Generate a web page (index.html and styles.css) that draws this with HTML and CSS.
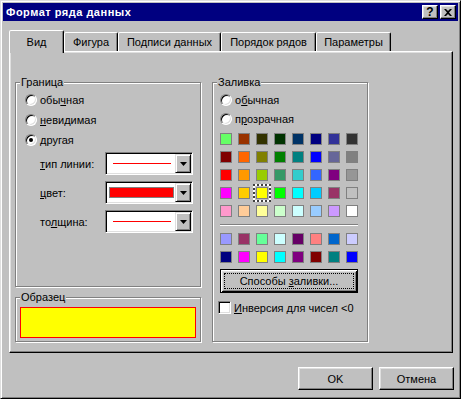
FILE: index.html
```html
<!DOCTYPE html>
<html lang="ru">
<head>
    <meta charset="UTF-8">
    <title>Формат ряда данных</title>
    <link rel="stylesheet" href="styles.css">
</head>
<body>

    <div class="window">
        <!-- Title bar -->
        <div class="titlebar">
            <span class="title">Формат ряда данных</span>
            <div class="title-buttons">
                <div class="tbtn help">?</div>
                <div class="tbtn">
                    <svg width="8" height="7" viewBox="0 0 8 7"><path d="M0 0h2l2 2 2-2h2L5 3.5 8 7H6L4 5 2 7H0l3-3.5z" fill="#000"/></svg>
                </div>
            </div>
        </div>

        <!-- Tabs -->
        <div class="tabs">
            <div class="tab active" style="width:55px">Вид</div>
            <div class="tab" style="width:54px">Фигура</div>
            <div class="tab" style="width:103px">Подписи данных</div>
            <div class="tab" style="width:95px">Порядок рядов</div>
            <div class="tab" style="width:75px">Параметры</div>
        </div>

        <!-- Tab page -->
        <div class="panel">
            <div class="col-left">
                <div class="group border-group">
                    <div class="group-title">Граница</div>
                    <div class="radio-row"><span class="rb"></span><span>обы<u>ч</u>ная</span></div>
                    <div class="radio-row"><span class="rb"></span><span><u>н</u>евидимая</span></div>
                    <div class="radio-row"><span class="rb checked"></span><span>другая</span></div>

                    <div class="combo-grid">
                        <span class="combo-label"><u>т</u>ип линии:</span>
                        <div class="combo">
                            <div class="combo-val"><span class="red-line"></span></div>
                            <div class="combo-btn"><svg width="7" height="4" viewBox="0 0 7 4"><path d="M0 0h7L3.5 4z" fill="#000"/></svg></div>
                        </div>

                        <span class="combo-label"><u>ц</u>вет:</span>
                        <div class="combo">
                            <div class="combo-val"><span class="red-box"></span></div>
                            <div class="combo-btn"><svg width="7" height="4" viewBox="0 0 7 4"><path d="M0 0h7L3.5 4z" fill="#000"/></svg></div>
                        </div>

                        <span class="combo-label">то<u>л</u>щина:</span>
                        <div class="combo">
                            <div class="combo-val"><span class="red-line"></span></div>
                            <div class="combo-btn"><svg width="7" height="4" viewBox="0 0 7 4"><path d="M0 0h7L3.5 4z" fill="#000"/></svg></div>
                        </div>
                    </div>
                </div>

                <div class="group sample-group">
                    <div class="group-title">Образец</div>
                    <div class="sample"></div>
                </div>
            </div>

            <div class="group fill-group">
                <div class="group-title">Заливка</div>
                <div class="radio-row short"><span class="rb"></span><span>о<u>б</u>ычная</span></div>
                <div class="radio-row short"><span class="rb"></span><span>п<u>р</u>озрачная</span></div>

                <div class="palette first">
                    <span class="cell" style="background:#66ff66"></span>
                    <span class="cell" style="background:#993300"></span>
                    <span class="cell" style="background:#333300"></span>
                    <span class="cell" style="background:#003300"></span>
                    <span class="cell" style="background:#003366"></span>
                    <span class="cell" style="background:#000080"></span>
                    <span class="cell" style="background:#333399"></span>
                    <span class="cell" style="background:#333333"></span>

                    <span class="cell" style="background:#800000"></span>
                    <span class="cell" style="background:#ff6600"></span>
                    <span class="cell" style="background:#808000"></span>
                    <span class="cell" style="background:#008000"></span>
                    <span class="cell" style="background:#008080"></span>
                    <span class="cell" style="background:#0000ff"></span>
                    <span class="cell" style="background:#666699"></span>
                    <span class="cell" style="background:#808080"></span>

                    <span class="cell" style="background:#ff0000"></span>
                    <span class="cell" style="background:#ff9900"></span>
                    <span class="cell" style="background:#99cc00"></span>
                    <span class="cell" style="background:#339966"></span>
                    <span class="cell" style="background:#33cccc"></span>
                    <span class="cell" style="background:#3366ff"></span>
                    <span class="cell" style="background:#800080"></span>
                    <span class="cell" style="background:#969696"></span>

                    <span class="cell" style="background:#ff00ff"></span>
                    <span class="cell" style="background:#ffcc00"></span>
                    <span class="cell selected" style="background:#ffff00"></span>
                    <span class="cell" style="background:#00ff00"></span>
                    <span class="cell" style="background:#00ffff"></span>
                    <span class="cell" style="background:#00ccff"></span>
                    <span class="cell" style="background:#993366"></span>
                    <span class="cell" style="background:#c0c0c0"></span>

                    <span class="cell" style="background:#ff99cc"></span>
                    <span class="cell" style="background:#ffcc99"></span>
                    <span class="cell" style="background:#ffff99"></span>
                    <span class="cell" style="background:#ccffcc"></span>
                    <span class="cell" style="background:#ccffff"></span>
                    <span class="cell" style="background:#99ccff"></span>
                    <span class="cell" style="background:#cc99ff"></span>
                    <span class="cell" style="background:#ffffff"></span>
                </div>

                <div class="separator"></div>

                <div class="palette">
                    <span class="cell" style="background:#9999ff"></span>
                    <span class="cell" style="background:#993366"></span>
                    <span class="cell" style="background:#66ff99"></span>
                    <span class="cell" style="background:#ccffff"></span>
                    <span class="cell" style="background:#660066"></span>
                    <span class="cell" style="background:#ff8080"></span>
                    <span class="cell" style="background:#0066cc"></span>
                    <span class="cell" style="background:#ccccff"></span>

                    <span class="cell" style="background:#000080"></span>
                    <span class="cell" style="background:#ff00ff"></span>
                    <span class="cell" style="background:#ffff00"></span>
                    <span class="cell" style="background:#00ffff"></span>
                    <span class="cell" style="background:#800080"></span>
                    <span class="cell" style="background:#800000"></span>
                    <span class="cell" style="background:#008080"></span>
                    <span class="cell" style="background:#0000ff"></span>
                </div>

                <div class="btn default fill-btn"><span class="focus"><span>Способы <u>з</u>аливки...</span></span></div>

                <div class="check-row"><span class="cb"></span><span><u>И</u>нверсия для чисел &lt;0</span></div>
            </div>
        </div>

        <!-- Dialog buttons -->
        <div class="footer">
            <div class="btn">OK</div>
            <div class="btn">Отмена</div>
        </div>
    </div>

</body>
</html>
```

FILE: styles.css
```css
/* Classic grey dialog palette */
:root {
    --face: #c0c0c0;
    --light: #dfdfdf;
    --hilite: #ffffff;
    --shadow: #808080;
    --dark: #000000;
    --title: #000080;
}

* {
    margin: 0;
    padding: 0;
    box-sizing: border-box;
}

body {
    background: var(--face);
    font-family: "Liberation Sans", Arial, sans-serif;
    font-size: 11px;
    color: #000;
}

u {
    text-decoration-thickness: 1px;
    text-underline-offset: 1px;
}

/* Window frame */
.window {
    width: 461px;
    height: 399px;
    border: 1px solid;
    border-color: var(--light) var(--dark) var(--dark) var(--light);
    box-shadow: inset 1px 1px var(--hilite), inset -1px -1px var(--shadow);
    padding: 2px;
}

/* Title bar */
.titlebar {
    height: 18px;
    background: var(--title);
    display: flex;
    align-items: center;
    justify-content: space-between;
    padding: 0 2px 0 3px;
}

.title {
    color: #fff;
    font-weight: bold;
    font-size: 11px;
    letter-spacing: 0.5px;
}

.title-buttons {
    display: flex;
    gap: 2px;
}

.tbtn {
    width: 16px;
    height: 14px;
    background: var(--face);
    border: 1px solid;
    border-color: var(--hilite) var(--dark) var(--dark) var(--hilite);
    box-shadow: inset -1px -1px var(--shadow), inset 1px 1px var(--light);
    display: flex;
    align-items: center;
    justify-content: center;
}

.tbtn.help {
    font-weight: bold;
    font-size: 12px;
    line-height: 12px;
}

/* Tabs */
.tabs {
    display: flex;
    align-items: flex-end;
    height: 21px;
    margin: 9px 0 0 6px;
}

.tab {
    height: 19px;
    border: 1px solid;
    border-bottom: none;
    border-color: var(--hilite) var(--dark) transparent var(--hilite);
    border-radius: 2px 2px 0 0;
    box-shadow: inset -1px 0 var(--shadow);
    text-align: center;
    padding-top: 3px;
    background: var(--face);
}

.tab.active {
    height: 23px;
    margin-bottom: -2px;
    padding-top: 5px;
    position: relative;
    z-index: 1;
}

/* Tab page */
.panel {
    width: 444px;
    height: 302px;
    margin-left: 6px;
    border: 1px solid;
    border-color: var(--hilite) var(--dark) var(--dark) var(--hilite);
    box-shadow: inset -1px -1px var(--shadow), inset 1px 1px var(--light);
    padding: 30px 0 0 5px;
    display: flex;
    gap: 11px;
}

.col-left {
    width: 186px;
    display: flex;
    flex-direction: column;
}

/* Etched group boxes */
.group {
    border: 1px solid var(--shadow);
    box-shadow: inset 1px 1px var(--hilite), 1px 1px var(--hilite);
}

.group-title {
    display: table;
    margin: -7px 0 0 4px;
    padding: 0 1px;
    line-height: 13px;
    background: var(--face);
}

.border-group {
    height: 205px;
    padding-left: 9px;
}

.border-group .group-title {
    margin-left: -5px;
}

.sample-group {
    height: 45px;
    margin-top: 10px;
}

.sample {
    height: 31px;
    margin: 3px 4px 0;
    background: #ffff00;
    border: 1px solid #ff0000;
}

.fill-group {
    width: 156px;
    height: 260px;
    padding-left: 7px;
}

.fill-group .group-title {
    margin-left: -3px;
}

/* Radio buttons */
.radio-row {
    display: flex;
    align-items: center;
    gap: 3px;
    height: 20px;
}

.group-title + .radio-row {
    margin-top: 1px;
}

.radio-row.short {
    height: 19px;
}

.rb {
    width: 12px;
    height: 12px;
    border-radius: 50%;
    background: #fff;
    border: 1px solid;
    border-color: var(--shadow) var(--hilite) var(--hilite) var(--shadow);
    box-shadow: inset 1px 1px var(--dark), inset -1px -1px var(--light);
    display: flex;
    align-items: center;
    justify-content: center;
}

.rb.checked::after {
    content: '';
    width: 4px;
    height: 4px;
    border-radius: 50%;
    background: #000;
}

/* Line combos */
.combo-grid {
    display: grid;
    grid-template-columns: 65px 88px;
    row-gap: 6px;
    align-items: center;
    margin: 2px 0 0 15px;
}

.combo {
    height: 23px;
    background: #fff;
    border: 1px solid;
    border-color: var(--shadow) var(--hilite) var(--hilite) var(--shadow);
    box-shadow: inset 1px 1px var(--dark), inset -1px -1px var(--light);
    padding: 1px;
    display: flex;
}

.combo-val {
    flex: 1;
    display: flex;
    align-items: center;
}

.red-line {
    flex: 1;
    height: 1px;
    background: #ff0000;
    margin: 0 4px 0 6px;
}

.red-box {
    flex: 1;
    height: 11px;
    background: #ff0000;
    border: 1px solid var(--shadow);
    margin: 0 1px 0 2px;
}

.combo-btn {
    width: 16px;
    background: var(--face);
    border: 1px solid;
    border-color: var(--light) var(--dark) var(--dark) var(--light);
    box-shadow: inset 1px 1px var(--hilite), inset -1px -1px var(--shadow);
    display: flex;
    align-items: center;
    justify-content: center;
}

/* Colour palette */
.palette {
    display: grid;
    grid-template-columns: repeat(8, 12px);
    grid-auto-rows: 12px;
    gap: 6px;
}

.palette.first {
    margin-top: 5px;
}

.cell {
    border: 1px solid var(--shadow);
}

.cell.selected {
    box-shadow: 0 0 0 1px var(--face), 0 0 0 3px #fff;
    outline: 2px dotted #404040;
    outline-offset: 1px;
}

.separator {
    width: 138px;
    height: 2px;
    border-top: 1px solid var(--shadow);
    border-bottom: 1px solid var(--hilite);
    margin: 7px 0;
}

/* Push buttons */
.btn {
    width: 75px;
    height: 23px;
    background: var(--face);
    border: 1px solid;
    border-color: var(--hilite) var(--dark) var(--dark) var(--hilite);
    box-shadow: inset -1px -1px var(--shadow), inset 1px 1px var(--light);
    display: flex;
    align-items: center;
    justify-content: center;
}

.btn.default {
    border: 1px solid var(--dark);
    box-shadow: inset 1px 1px var(--hilite), inset -1px -1px var(--dark),
                inset 2px 2px var(--light), inset -2px -2px var(--shadow);
    padding: 3px;
}

.fill-btn {
    width: 138px;
    height: 24px;
    margin-top: 6px;
}

.focus {
    flex: 1;
    align-self: stretch;
    border: 1px dotted #000;
    display: flex;
    align-items: center;
    justify-content: center;
}

/* Checkbox */
.check-row {
    display: flex;
    align-items: center;
    gap: 3px;
    margin: 8px 0 0 -2px;
}

.cb {
    width: 13px;
    height: 13px;
    background: #fff;
    border: 1px solid;
    border-color: var(--shadow) var(--hilite) var(--hilite) var(--shadow);
    box-shadow: inset 1px 1px var(--dark), inset -1px -1px var(--light);
}

/* Dialog buttons */
.footer {
    display: flex;
    justify-content: flex-end;
    gap: 6px;
    margin: 14px 4px 0 0;
}
```
